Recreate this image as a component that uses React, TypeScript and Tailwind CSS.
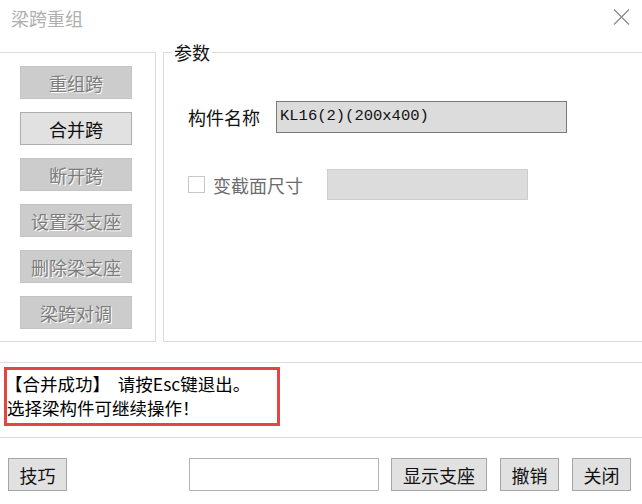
import React from "react";

const SIDE_BUTTONS = [
  { label: "重组跨", enabled: false },
  { label: "合并跨", enabled: true },
  { label: "断开跨", enabled: false },
  { label: "设置梁支座", enabled: false },
  { label: "删除梁支座", enabled: false },
  { label: "梁跨对调", enabled: false },
];

function SideButton({ label, enabled }: { label: string; enabled: boolean }) {
  return (
    <button
      type="button"
      className={`w-[112px] h-[33px] border text-[18px] leading-[24px] ${
        enabled
          ? "bg-[#e1e1e1] border-[#adadad] text-[#111]"
          : "bg-[#cccccc] border-[#c4c4c4] text-[#7c7c7c] [text-shadow:1px_1px_0_#ffffff]"
      }`}
    >
      {label}
    </button>
  );
}

function BarButton({ label, width }: { label: string; width: string }) {
  return (
    <button
      type="button"
      className={`${width} h-[33px] bg-[#e1e1e1] border border-[#a6a6a6] text-[18px] leading-[24px] text-[#111]`}
    >
      {label}
    </button>
  );
}

export default function App() {
  return (
    <div className="w-[642px] h-[504px] bg-white overflow-hidden flex flex-col font-['Noto_Sans_CJK_SC',sans-serif]">
      {/* Title bar */}
      <div className="h-[42px] flex items-start justify-between shrink-0">
        <div className="pl-[11px] pt-[6px] text-[18px] leading-[24px] text-[#b0b0b0]">
          梁跨重组
        </div>
        <svg
          className="mt-[9px] mr-[12px]"
          width="17"
          height="16"
          viewBox="0 0 17 16"
        >
          <path d="M1 0.5 L16 15.5 M16 0.5 L1 15.5" stroke="#8c8c8c" strokeWidth="1.3" />
        </svg>
      </div>

      {/* Main area */}
      <div className="flex h-[300px] shrink-0">
        <div className="mt-[10px] w-[156px] h-[290px] border-t border-r border-b border-[#dcdcdc] flex flex-col items-start pl-[20px] pt-[13px] gap-[13px]">
          {SIDE_BUTTONS.map((b) => (
            <SideButton key={b.label} label={b.label} enabled={b.enabled} />
          ))}
        </div>

        <fieldset className="ml-[7px] flex-1 h-[300px] border-t border-l border-b border-[#dcdcdc]">
          <legend className="ml-[8px] px-[2px] text-[18px] leading-[20px] text-[#111]">
            参数
          </legend>
          <div className="pl-[24px] pt-[39px] flex flex-col">
            <div className="flex items-center h-[32px]">
              <span className="w-[88px] text-[18px] leading-[24px] text-[#111]">
                构件名称
              </span>
              <div className="w-[291px] h-[32px] border border-[#7a7a7a] bg-[#dcdcdc] pl-[3px] flex items-center font-['Liberation_Mono',monospace] text-[15.5px] text-[#111]">
                KL16(2)(200x400)
              </div>
            </div>
            <div className="flex items-center h-[31px] mt-[36px]">
              <span className="w-[17px] h-[17px] border border-[#c8c8c8] bg-white" />
              <span className="ml-[8px] w-[114px] text-[18px] leading-[24px] text-[#6d6d6d]">
                变截面尺寸
              </span>
              <div className="w-[201px] h-[31px] border border-[#cdcdcd] bg-[#dcdcdc]" />
            </div>
          </div>
        </fieldset>
      </div>

      {/* Message area */}
      <div className="mt-[20px] h-[76px] border-y border-[#dedede] pl-[4px] pt-[4px] shrink-0">
        <div className="w-[276px] h-[59px] border-[3px] border-[#e04646] pt-[2px] text-[17.5px] leading-[24px] text-black">
          <div className="whitespace-pre -ml-[2px]">【合并成功】  请按Esc键退出。</div>
          <div>选择梁构件可继续操作！</div>
        </div>
      </div>

      {/* Bottom bar */}
      <div className="flex items-start pl-[8px] pt-[20px]">
        <BarButton label="技巧" width="w-[59px]" />
        <div className="ml-[122px] w-[190px] h-[33px] border border-[#b4b4b4] bg-white" />
        <div className="ml-[12px]">
          <BarButton label="显示支座" width="w-[96px]" />
        </div>
        <div className="ml-[13px]">
          <BarButton label="撤销" width="w-[59px]" />
        </div>
        <div className="ml-[13px]">
          <BarButton label="关闭" width="w-[59px]" />
        </div>
      </div>
    </div>
  );
}
